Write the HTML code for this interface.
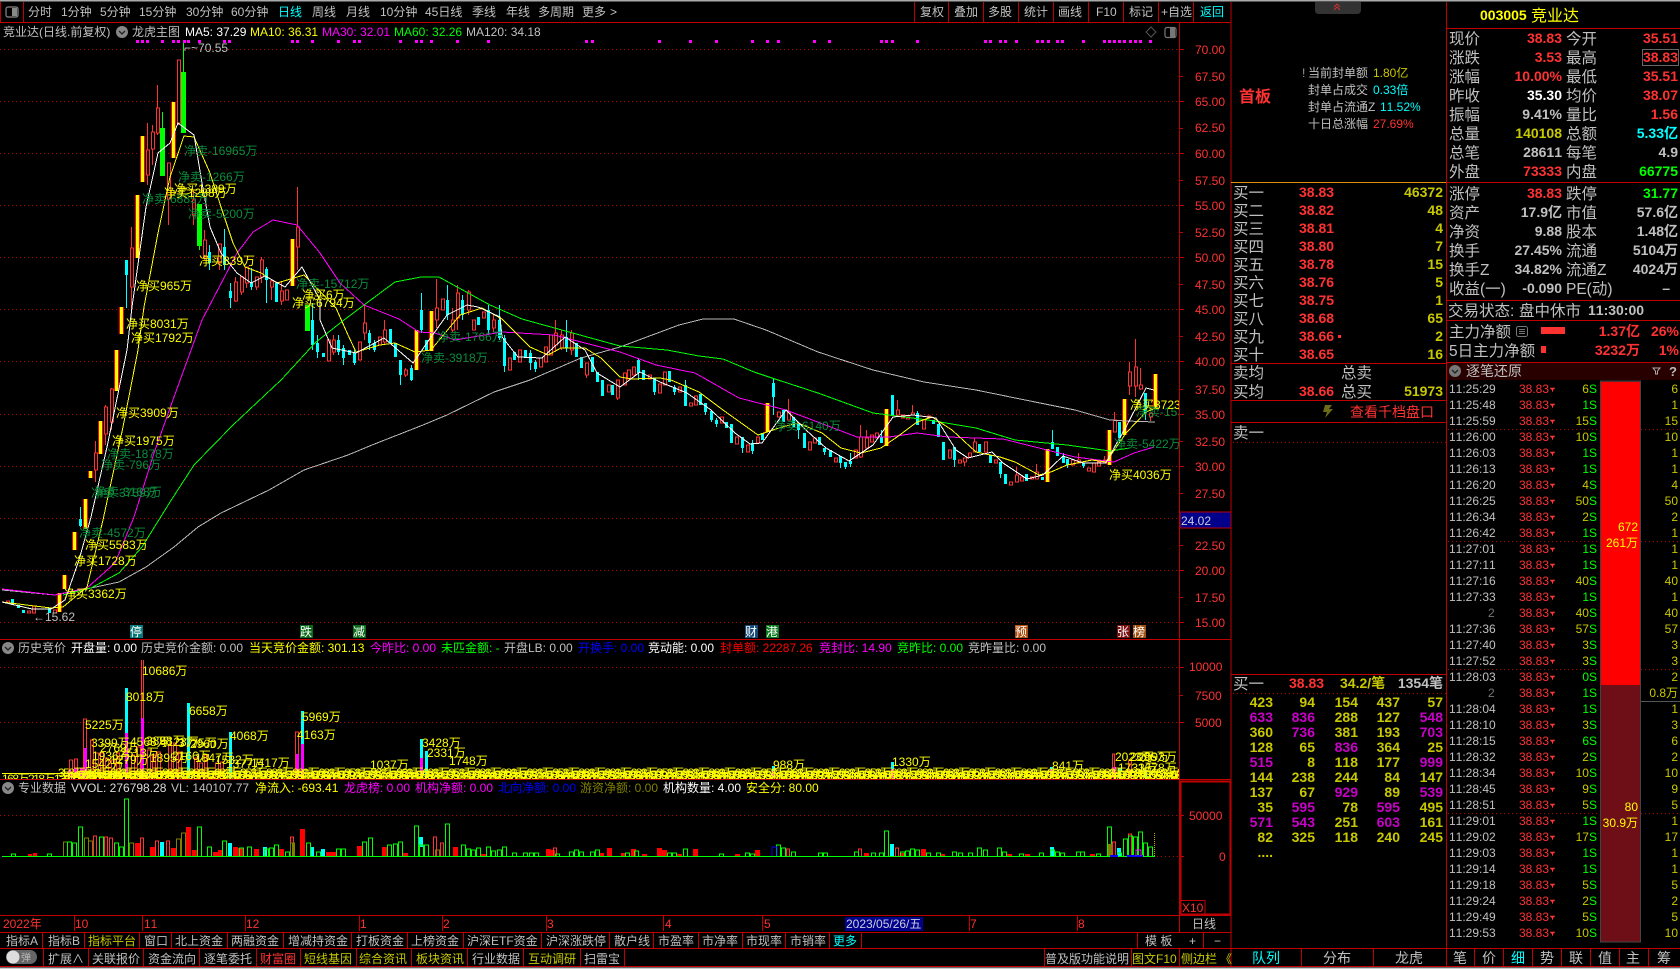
<!DOCTYPE html>
<html><head><meta charset="utf-8"><style>
html,body{margin:0;padding:0;background:#000;width:1680px;height:969px;overflow:hidden}
svg{display:block}
text{font-family:"Liberation Sans","WenQuanYi Zen Hei","Noto Sans CJK SC",sans-serif;font-size:12px;fill:#c0c0c0;white-space:pre;font-kerning:none}
.g{fill:#c0c0c0}.w{fill:#fff}.r{fill:#ff3232}.y{fill:#ff0}.o{fill:#c8c800}.c{fill:#0ff}.m{fill:#f0f}.gr{fill:#0f0}.b{fill:#00f}.d{fill:#0a8c3c}.v{fill:#808000}.pu{fill:#c800c8}
.L text{font-size:15.5px}
.B text,text.B{font-weight:bold;font-size:14px}
.e text,text.e{text-anchor:end}
.C text{text-anchor:middle}
.T text{font-size:14px}
.Tk text{font-size:12px}
</style></head><body>
<svg width="1680" height="969" viewBox="0 0 1680 969" xmlns="http://www.w3.org/2000/svg">
<defs>
<clipPath id="mc"><rect x="0" y="23" width="1179" height="616"/></clipPath>
<clipPath id="s1"><rect x="0" y="660" width="1179" height="119"/></clipPath>
<pattern id="ar" x="1550" y="380.7" width="6" height="16" patternUnits="userSpaceOnUse"><path d="M0 7h5v1h-1v1h-1v2h-1v-2h-1v-1h-1z" fill="#ff3232"/></pattern>
</defs>
<rect width="1680" height="969" fill="#000"/>
<rect x="0" y="0" width="1680" height="1.5" fill="#aaa"/>
<rect x="0" y="967.5" width="1680" height="1.5" fill="#ccc"/>

<!-- structural lines -->
<g stroke="#c00000" stroke-width="1" shape-rendering="crispEdges" fill="none">
<path d="M0 22.5H1231M0 639.5H1231M0 779.5H1231M0 915.5H1231M0 932.5H1231M0 948.5H1680M0 966.5H1680"/>
<path d="M0.5 2V22M23.5 2V22M1231 2V967M1179.5 22V932M1446.5 2V967"/>
<path d="M1447 28.5H1680M1447 182.5H1680M1231 363.5H1446M1231 400.5H1446M1231 422.5H1446M1231 674.5H1446M1447 300.5H1680M1447 320.5H1680M1447 362.5H1680"/>
<path d="M914.5 2V22M948.5 2V22M983.5 2V22M1018.5 2V22M1053.5 2V22M1088.5 2V22M1123.5 2V22M1158.5 2V22M1193.5 2V22"/>
<path d="M42.5 932V948M84.5 932V948M139.5 932V948M171.5 932V948M227.5 932V948M283.5 932V948M351.5 932V948M407.5 932V948M463.5 932V948M541.5 932V948M609.5 932V948M653.5 932V948M698.5 932V948M742.5 932V948M785.5 932V948M829.5 932V948M861.5 932V948M1137.5 932V948M1203.5 932V948"/>
<path d="M43.5 948V966M88.5 948V966M143.5 948V966M199.5 948V966M256.5 948V966M300.5 948V966M356.5 948V966M411.5 948V966M467.5 948V966M523.5 948V966M580.5 948V966M624.5 948V966M1044.5 948V966M1131.5 948V966M1179.5 948V966"/>
<path d="M1301.5 948V966M1373.5 948V966M1474.5 948V966M1503.5 948V966M1532.5 948V966M1561.5 948V966M1590.5 948V966M1619.5 948V966M1648.5 948V966"/>
<path d="M74.5 916V931M142.5 916V931M245.5 916V931M359.5 916V931M442.5 916V931M546.5 916V931M663.5 916V931M762.5 916V931M969.5 916V931M1077.5 916V931"/>
<rect x="1180.5" y="781.5" width="50" height="133" stroke-width="2"/>
<rect x="1181" y="900.5" width="24" height="14"/>
</g>
<path d="M1231 182.5H1446" stroke="#e09000" stroke-width="1" shape-rendering="crispEdges"/>

<!-- dotted grid -->
<g stroke="#b00000" stroke-width="1" stroke-dasharray="1 3" shape-rendering="crispEdges">
<path d="M0 49.5H1180M0 101.5H1180M0 153.5H1180M0 205.5H1180M0 257.5H1180M0 309.5H1180M0 361.5H1180M0 414.5H1180M0 466.5H1180M0 518.5H1180M0 570.5H1180M0 622.5H1180M0 667.5H1180M0 722.5H1180M0 815.5H1180M1157 856.5H1180"/>
<path d="M1233 442.5H1446M1233 693.5H1446M1448 429.5H1600M1641 429.5H1680M1448 541.5H1600M1641 541.5H1680M1448 669.5H1600M1641 669.5H1680M1448 813.5H1600M1641 813.5H1680"/>
</g>
<path d="M1180 49.5h4M1180 76.5h3M1180 101.5h4M1180 128.5h3M1180 153.5h4M1180 180.5h3M1180 205.5h4M1180 232.5h3M1180 257.5h4M1180 284.5h3M1180 309.5h4M1180 336.5h3M1180 361.5h4M1180 389.5h3M1180 414.5h4M1180 441.5h3M1180 466.5h4M1180 493.5h3M1180 545.5h3M1180 570.5h4M1180 597.5h3M1180 622.5h4M1180 667.5h4M1180 695.5h3M1180 722.5h4M1180 815.5h4M1180 856.5h4" stroke="#c00000" shape-rendering="crispEdges"/>

<!-- top menu -->
<rect x="6" y="7" width="12" height="10" rx="2" fill="none" stroke="#888" stroke-width="1.2"/><rect x="12" y="8" width="5" height="8" fill="#888"/>
<g>
<text x="28" y="16">分时</text><text x="61" y="16">1分钟</text><text x="100" y="16">5分钟</text><text x="139" y="16">15分钟</text><text x="186" y="16">30分钟</text><text x="231" y="16">60分钟</text><text x="278" y="16" class="c">日线</text><text x="312" y="16">周线</text><text x="346" y="16">月线</text><text x="380" y="16">10分钟</text><text x="425" y="16">45日线</text><text x="472" y="16">季线</text><text x="506" y="16">年线</text><text x="538" y="16">多周期</text><text x="582" y="16">更多</text><text x="610" y="16">&gt;</text>
<text x="920" y="16">复权</text><text x="954" y="16">叠加</text><text x="988" y="16">多股</text><text x="1024" y="16">统计</text><text x="1058" y="16">画线</text><text x="1096" y="16">F10</text><text x="1129" y="16">标记</text><text x="1161" y="16">+自选</text><text x="1200" y="16" class="c">返回</text>
</g>

<!-- main title -->
<text x="3" y="36">竞业达(日线.前复权)</text>
<circle cx="122" cy="32" r="6" fill="#888"/><path d="M119 31l3 3 3-3" stroke="#222" stroke-width="1.3" fill="none"/>
<text x="132" y="36">龙虎主图</text>
<text x="185" y="36" class="w">MA5: 37.29</text><text x="250" y="36" class="y">MA10: 36.31</text><text x="322" y="36" class="m">MA30: 32.01</text><text x="394" y="36" class="gr">MA60: 32.26</text><text x="466" y="36" class="g">MA120: 34.18</text>
<path fill="#f0f" shape-rendering="crispEdges" d="M136 40h3v3h-3zM141 40h3v3h-3zM146 40h3v3h-3zM161 40h3v3h-3zM172 40h3v3h-3zM177 40h3v3h-3zM183 40h3v3h-3zM187 40h3v3h-3zM198 40h3v3h-3zM223 40h3v3h-3zM228 40h3v3h-3zM291 40h3v3h-3zM296 40h3v3h-3zM311 40h3v3h-3zM337 40h3v3h-3zM353 40h3v3h-3zM358 40h3v3h-3zM399 40h3v3h-3zM415 40h3v3h-3zM420 40h3v3h-3zM430 40h3v3h-3zM456 40h3v3h-3zM487 40h3v3h-3zM585 40h3v3h-3zM591 40h3v3h-3zM658 40h3v3h-3zM689 40h3v3h-3zM715 40h3v3h-3zM751 40h3v3h-3zM766 40h3v3h-3zM777 40h3v3h-3zM813 40h3v3h-3zM828 40h3v3h-3zM880 40h3v3h-3zM885 40h3v3h-3zM891 40h3v3h-3zM916 40h3v3h-3zM984 40h3v3h-3zM989 40h3v3h-3zM999 40h3v3h-3zM1004 40h3v3h-3zM1015 40h3v3h-3zM1036 40h3v3h-3zM1041 40h3v3h-3zM1047 40h3v3h-3zM1056 40h3v3h-3zM1061 40h3v3h-3zM1082 40h3v3h-3zM1103 40h3v3h-3zM1108 40h3v3h-3zM1113 40h3v3h-3zM1118 40h3v3h-3zM1123 40h3v3h-3zM1129 40h3v3h-3zM1134 40h3v3h-3zM1139 40h3v3h-3zM1149 40h3v3h-3z"/>
<path d="M1151 27l5 5-5 5-5-5z" fill="none" stroke="#555"/>
<rect x="1165" y="27.5" width="11" height="10" rx="2" fill="none" stroke="#777" stroke-width="1.2"/><rect x="1170" y="28" width="5" height="9" fill="#777"/>

<!-- candles -->
<g clip-path="url(#mc)" shape-rendering="crispEdges">
<path fill="none" stroke="#ff3232" d="M95.5 441V482M105.5 405V445M111.5 388V430M131.5 227V310M147.5 123V185M152.5 125V165M157.5 85V135M168.5 163V225M178.5 60V125M193.5 190V225M204.5 230V260M219.5 244V270M235.5 277V302M241.5 277V295M246.5 267V288M256.5 277V290M261.5 257V283M271.5 280V300M281.5 282V305M297.5 187V270M333.5 335V355M364.5 305V340M384.5 320V345M405.5 368V377M436.5 279V328M452.5 308V332M457.5 285V330M468.5 290V315M493.5 315V332M555.5 320V352M561.5 330V350M571.5 330V355M586.5 363V378M617.5 380V400M788.5 399V420M860.5 425V458M866.5 430V450M897.5 400V415M912.5 405V415M964.5 458V466M974.5 438V452M1016.5 467V482M1036.5 464V479M1078.5 453V463M1104.5 456V463M1114.5 412V432M1129.5 362V395M1135.5 339V397M1140.5 368V390M1150.5 413V421"/>
<path fill="#000" stroke="#ff3232" d="M6.5 601h3v2h-3zM32.5 606h3v7h-3zM27.5 611h3v2h-3zM53.5 610h3v3h-3zM94.5 453h3v17h-3zM104.5 407h3v27h-3zM110.5 389h3v33h-3zM130.5 248h3v39h-3zM146.5 150h3v25h-3zM151.5 132h3v17h-3zM156.5 108h3v25h-3zM167.5 163h3v36h-3zM177.5 60h3v63h-3zM192.5 200h3v15h-3zM203.5 240h3v17h-3zM218.5 244h3v19h-3zM234.5 282h3v19h-3zM240.5 277h3v15h-3zM245.5 267h3v16h-3zM255.5 277h3v10h-3zM260.5 260h3v17h-3zM270.5 281h3v6h-3zM280.5 291h3v10h-3zM285.5 290h3v10h-3zM296.5 227h3v20h-3zM327.5 340h3v21h-3zM332.5 340h3v12h-3zM358.5 342h3v18h-3zM363.5 323h3v10h-3zM378.5 337h3v8h-3zM383.5 330h3v12h-3zM404.5 370h3v5h-3zM435.5 308h3v12h-3zM441.5 299h3v11h-3zM451.5 320h3v10h-3zM456.5 293h3v25h-3zM467.5 292h3v18h-3zM472.5 320h3v10h-3zM482.5 312h3v6h-3zM492.5 320h3v8h-3zM508.5 358h3v12h-3zM518.5 350h3v12h-3zM539.5 358h3v9h-3zM544.5 347h3v15h-3zM549.5 335h3v20h-3zM554.5 333h3v12h-3zM560.5 335h3v13h-3zM570.5 333h3v17h-3zM585.5 363h3v12h-3zM607.5 385h3v7h-3zM616.5 380h3v18h-3zM623.5 373h3v12h-3zM627.5 370h3v9h-3zM632.5 367h3v8h-3zM648.5 375h3v4h-3zM658.5 384h3v9h-3zM663.5 372h3v13h-3zM678.5 387h3v5h-3zM689.5 403h3v3h-3zM694.5 396h3v9h-3zM720.5 417h3v6h-3zM735.5 437h3v7h-3zM746.5 445h3v7h-3zM756.5 437h3v6h-3zM777.5 412h3v5h-3zM787.5 412h3v8h-3zM808.5 442h3v8h-3zM813.5 438h3v5h-3zM834.5 458h3v4h-3zM854.5 450h3v8h-3zM859.5 437h3v20h-3zM865.5 438h3v10h-3zM870.5 435h3v7h-3zM875.5 433h3v5h-3zM896.5 410h3v5h-3zM901.5 415h3v3h-3zM906.5 417h3v2h-3zM911.5 413h3v2h-3zM922.5 420h3v9h-3zM927.5 416h3v2h-3zM948.5 450h3v8h-3zM958.5 460h3v3h-3zM963.5 458h3v4h-3zM968.5 453h3v4h-3zM973.5 442h3v10h-3zM984.5 442h3v10h-3zM994.5 460h3v3h-3zM1009.5 482h3v3h-3zM1015.5 475h3v7h-3zM1020.5 477h3v4h-3zM1030.5 477h3v2h-3zM1035.5 472h3v7h-3zM1071.5 460h3v5h-3zM1077.5 460h3v3h-3zM1087.5 468h3v3h-3zM1092.5 463h3v9h-3zM1097.5 462h3v4h-3zM1103.5 460h3v3h-3zM1113.5 420h3v12h-3zM1128.5 372h3v14h-3zM1134.5 367h3v19h-3zM1139.5 385h3v4h-3zM1149.5 413h3v4h-3z"/>
<path fill="none" stroke="#0ff" d="M80.5 507V527M126.5 260V308M209.5 245V270M224.5 229V270M230.5 283V308M251.5 268V290M266.5 267V303M312.5 303V350M317.5 335V358M338.5 335V355M343.5 345V365M354.5 350V365M369.5 330V350M374.5 340V352M400.5 360V385M411.5 365V381M421.5 293V333M447.5 285V320M462.5 295V320M488.5 305V335M499.5 305V340M504.5 335V372M530.5 350V370M535.5 360V372M566.5 320V352M638.5 358V380M654.5 378V395M674.5 385V395M685.5 380V406M705.5 403V415M711.5 411V422M716.5 418V427M742.5 437V453M752.5 440V454M773.5 378V415M798.5 424V439M824.5 448V455M840.5 456V468M845.5 462V469M850.5 453V467M881.5 430V443M917.5 411V425M954.5 447V467M1000.5 462V478M1052.5 430V449M1063.5 453V463M1067.5 459V468M1083.5 463V468M1119.5 422V443M1145.5 393V420"/>
<path fill="#0ff" d="M11 599h3v6h-3zM17 605h3v3h-3zM22 610h3v3h-3zM48 608h3v5h-3zM79 519h3v7h-3zM125 260h3v15h-3zM208 252h3v11h-3zM223 247h3v18h-3zM229 291h3v7h-3zM250 282h3v5h-3zM265 269h3v11h-3zM275 283h3v19h-3zM311 320h3v25h-3zM316 343h3v9h-3zM322 353h3v4h-3zM337 340h3v12h-3zM342 348h3v10h-3zM348 350h3v5h-3zM353 353h3v10h-3zM368 333h3v10h-3zM373 343h3v7h-3zM389 329h3v14h-3zM394 343h3v14h-3zM399 360h3v15h-3zM410 368h3v12h-3zM420 310h3v20h-3zM425 340h3v10h-3zM446 300h3v15h-3zM461 300h3v15h-3zM477 317h3v8h-3zM487 310h3v20h-3zM498 320h3v18h-3zM503 338h3v28h-3zM513 352h3v8h-3zM524 350h3v8h-3zM529 353h3v10h-3zM534 362h3v7h-3zM565 337h3v11h-3zM575 343h3v14h-3zM580 357h3v11h-3zM591 357h3v15h-3zM596 372h3v10h-3zM601 380h3v16h-3zM611 385h3v10h-3zM637 360h3v13h-3zM642 370h3v10h-3zM653 378h3v14h-3zM668 371h3v11h-3zM673 387h3v5h-3zM684 385h3v21h-3zM699 394h3v11h-3zM704 403h3v9h-3zM710 411h3v9h-3zM715 420h3v4h-3zM725 422h3v6h-3zM730 424h3v19h-3zM741 437h3v11h-3zM751 443h3v8h-3zM761 433h3v7h-3zM772 383h3v14h-3zM782 410h3v12h-3zM792 417h3v10h-3zM797 424h3v6h-3zM803 433h3v15h-3zM818 437h3v8h-3zM823 448h3v4h-3zM829 450h3v7h-3zM839 456h3v7h-3zM844 462h3v5h-3zM849 461h3v3h-3zM880 437h3v6h-3zM891 395h3v20h-3zM916 413h3v12h-3zM932 420h3v4h-3zM937 424h3v13h-3zM942 442h3v18h-3zM953 447h3v13h-3zM978 444h3v8h-3zM989 455h3v8h-3zM999 462h3v12h-3zM1004 474h3v10h-3zM1025 474h3v7h-3zM1041 477h3v3h-3zM1051 442h3v7h-3zM1056 447h3v9h-3zM1062 456h3v7h-3zM1066 459h3v6h-3zM1082 463h3v3h-3zM1118 422h3v16h-3zM1144 393h3v20h-3z"/>
<path fill="none" stroke="#0f0" d="M162.5 112V176M183.5 43V133M199.5 204V250M307.5 305V331"/>
<path fill="#0f0" d="M160 128h5v48h-5zM181 72h5v61h-5zM197 204h5v42h-5zM305 305h5v26h-5z"/>
<path fill="#f00" d="M57 593h5v19h-5zM62 575h5v14h-5zM72 532h5v18h-5zM83 499h5v30h-5zM88 471h5v7h-5zM98 421h5v33h-5zM114 350h5v41h-5zM119 307h5v27h-5zM135 195h5v63h-5zM140 136h5v46h-5zM171 102h5v56h-5zM290 239h5v47h-5zM414 330h5v40h-5zM429 311h5v40h-5zM765 403h5v29h-5zM884 409h5v37h-5zM1045 449h5v33h-5zM1107 430h5v35h-5zM1122 399h5v36h-5zM1153 374h5v33h-5z"/>
<path fill="#ff0" d="M58 593h3v19h-3zM63 575h3v14h-3zM73 532h3v18h-3zM84 499h3v30h-3zM89 471h3v7h-3zM99 421h3v33h-3zM115 350h3v41h-3zM120 307h3v27h-3zM136 195h3v63h-3zM141 136h3v46h-3zM172 102h3v56h-3zM291 239h3v47h-3zM415 330h3v40h-3zM430 311h3v40h-3zM766 403h3v29h-3zM885 409h3v37h-3zM1046 449h3v33h-3zM1108 430h3v35h-3zM1123 399h3v36h-3zM1154 374h3v33h-3z"/>
</g>

<!-- MA lines -->
<g clip-path="url(#mc)" fill="none" stroke-width="1" shape-rendering="crispEdges">
<polyline stroke="#b8b8b8" points="2,590 55,595 91,588 119,582 146,567 174,547 198,527 221,513 269,490 304,470 348,455 372,445 423,425 447,415 494,392 530,380 581,358 620,347 679,325 703,319 734,319 766,330 818,352 873,370 924,382 976,390 1035,402 1075,410 1110,420 1126,421 1155,422"/>
<polyline stroke="#0f0" points="63,595 91,588 119,573 142,547 170,502 194,465 233,425 281,380 316,342 344,320 364,305 395,282 421,277 439,277 490,305 522,319 569,332 620,346 667,350 699,356 723,359 754,372 778,380 818,393 873,413 928,420 976,428 1015,440 1067,445 1110,451 1130,448"/>
<polyline stroke="#f0f" points="2,589 55,595 87,588 115,563 134,517 154,453 174,397 202,320 237,253 253,232 273,220 297,225 320,253 340,283 364,305 399,319 419,332 435,333 455,340 502,332 554,335 620,352 656,365 695,373 739,398 786,410 857,437 889,437 917,433 948,437 1003,439 1039,448 1075,457 1114,462 1134,453 1154,447"/>
<polyline stroke="#ff0" points="2,602 51,608 63,607 87,587 103,520 123,427 138,350 144,307 158,233 170,177 184,136 194,137 210,173 221,207 233,243 245,267 261,273 277,283 304,275 336,308 348,335 356,352 380,345 395,343 415,352 431,350 460,315 482,308 502,319 530,347 548,355 561,348 585,348 601,358 620,377 632,379 660,378 671,380 699,392 723,410 758,435 782,427 798,423 822,433 841,448 861,453 881,448 897,437 917,422 932,417 952,430 976,452 1000,457 1015,462 1039,475 1051,472 1067,465 1092,460 1106,462 1126,433 1146,412 1158,407"/>
<polyline stroke="#fff" points="2,602 32,609 51,609 65,600 79,560 91,517 107,447 127,350 132,307 146,207 158,153 170,143 178,123 194,135 202,183 210,227 221,253 237,273 251,283 265,276 285,287 302,267 320,300 320,320 332,348 356,353 384,338 413,363 429,340 447,315 467,305 478,307 500,317 502,337 518,357 542,358 565,337 585,350 597,373 620,387 640,372 660,382 687,393 711,410 735,433 750,444 762,443 786,410 806,430 826,448 849,461 873,445 893,417 913,415 936,418 956,450 968,458 992,452 1003,463 1027,479 1043,475 1063,456 1083,463 1106,463 1114,448 1126,427 1146,388 1154,390"/>
</g>

<!-- main labels -->
<g clip-path="url(#mc)">
<text x="184" y="52" fill="#c0c0c0">⌐~70.55</text>
<text x="33" y="621">←15.62</text>
<g class="d-g">
<text x="142" y="203" class="d">净卖-6885万</text><text x="184" y="155" class="d">净卖-16965万</text><text x="178" y="181" class="d">净卖-1266万</text><text x="188" y="218" class="d">净卖-5200万</text><text x="296" y="288" class="d">净卖-15712万</text><text x="437" y="341" class="d">净卖-1766万</text><text x="421" y="362" class="d">净卖-3918万</text><text x="107" y="458" class="d">净卖-1878万</text><text x="101" y="469" class="d">净卖-796万</text><text x="95" y="496" class="d">净卖-3168万</text><text x="91" y="497" class="d">净卖-3759万</text><text x="79" y="537" class="d">净卖-4572万</text><text x="774" y="430" class="d">净卖-6140万</text><text x="1114" y="448" class="d">净卖-5422万</text><text x="1136" y="416" class="d">净卖-1532万</text>
</g>
<text x="174" y="193" class="y">净买1389万</text><text x="164" y="197" class="y">净买1288万</text><text x="199" y="265" class="y">净买839万</text><text x="136" y="290" class="y">净买965万</text><text x="302" y="299" class="y">净买6万</text><text x="292" y="307" class="y">净买6794万</text><text x="126" y="328" class="y">净买8031万</text><text x="131" y="342" class="y">净买1792万</text><text x="116" y="417" class="y">净买3909万</text><text x="112" y="445" class="y">净买1975万</text><text x="85" y="549" class="y">净买5583万</text><text x="74" y="565" class="y">净买1728万</text><text x="64" y="598" class="y">净买3362万</text><text x="1109" y="479" class="y">净买4036万</text><text x="1130" y="409" class="y">净买3723万</text>
</g>
<g shape-rendering="crispEdges">
<rect x="130" y="625" width="13" height="13" fill="#0a7878"/><rect x="300" y="625" width="13" height="13" fill="#0a6a1a"/><rect x="353" y="625" width="13" height="13" fill="#0a6a1a"/><rect x="745" y="625" width="13" height="13" fill="#174a78"/><rect x="766" y="625" width="13" height="13" fill="#0a7a1a"/><rect x="1015" y="625" width="13" height="13" fill="#b05010"/><rect x="1117" y="625" width="13" height="13" fill="#7a1010"/><rect x="1133" y="625" width="13" height="13" fill="#a05010"/>
</g>
<g style="fill:#fff">
<text x="130" y="636" class="w">停</text><text x="300" y="636" class="w">跌</text><text x="353" y="636" class="w">减</text><text x="745" y="636" class="w">财</text><text x="766" y="636" class="w">港</text><text x="1015" y="636" class="w">预</text><text x="1117" y="636" class="w">张</text><text x="1133" y="636" class="w">榜</text>
</g>

<!-- right axis labels -->
<g class="r-a">
<text x="1195" y="54" class="r">70.00</text><text x="1195" y="81" class="r">67.50</text><text x="1195" y="106" class="r">65.00</text><text x="1195" y="132" class="r">62.50</text><text x="1195" y="158" class="r">60.00</text><text x="1195" y="185" class="r">57.50</text><text x="1195" y="210" class="r">55.00</text><text x="1195" y="237" class="r">52.50</text><text x="1195" y="262" class="r">50.00</text><text x="1195" y="289" class="r">47.50</text><text x="1195" y="314" class="r">45.00</text><text x="1195" y="341" class="r">42.50</text><text x="1195" y="366" class="r">40.00</text><text x="1195" y="394" class="r">37.50</text><text x="1195" y="419" class="r">35.00</text><text x="1195" y="446" class="r">32.50</text><text x="1195" y="471" class="r">30.00</text><text x="1195" y="498" class="r">27.50</text><text x="1195" y="550" class="r">22.50</text><text x="1195" y="575" class="r">20.00</text><text x="1195" y="602" class="r">17.50</text><text x="1195" y="627" class="r">15.00</text>
</g>
<rect x="1180" y="512" width="51" height="16" fill="#00008b" stroke="#c00000" shape-rendering="crispEdges"/>
<text x="1181" y="525" fill="#ccc" style="fill:#ccd">24.02</text>

<!-- sub panel 1 -->
<circle cx="8" cy="648" r="6" fill="#888"/><path d="M5 647l3 3 3-3" stroke="#222" stroke-width="1.3" fill="none"/>
<text x="18" y="652">历史竞价</text><text x="71" y="652" class="w">开盘量: 0.00</text><text x="141" y="652">历史竞价金额: 0.00</text><text x="249" y="652" class="y">当天竞价金额: 301.13</text><text x="370" y="652" class="m">今昨比: 0.00</text><text x="441" y="652" class="gr">未匹金额: -</text><text x="504" y="652">开盘LB: 0.00</text><text x="578" y="652" class="b">开换手: 0.00</text><text x="648" y="652" class="w">竞动能: 0.00</text><text x="720" y="652" style="fill:#f00">封单额: 22287.26</text><text x="819" y="652" class="m">竞封比: 14.90</text><text x="897" y="652" class="gr">竞昨比: 0.00</text><text x="968" y="652">竞昨量比: 0.00</text>
<g clip-path="url(#s1)" shape-rendering="crispEdges">
<path fill="none" stroke="#ff3232" d="M69.5 778V760h3V778M74.5 778V759h3V778M83.5 778V719h3V778M90.5 778V740h3V778M95.5 778V753h3V778M100.5 778V753h3V778M105.5 778V758h3V778M111.5 778V760h3V778M116.5 778V753h3V778M131.5 778V755h3V778M137.5 778V747h3V778M141.5 778V659h2V778M147.5 778V750h3V778M152.5 778V755h3V778M157.5 778V752h3V778M168.5 778V745h3V778M173.5 778V743h3V778M178.5 778V752h3V778M194.5 778V758h3V778M199.5 778V763h3V778M204.5 778V755h3V778M215.5 778V763h3V778M220.5 778V762h3V778M295.5 778V732h3V778M1112.5 778V754h2V778M1128.5 778V760h3V778"/>
<path fill="#0ff" d="M125 688h3v90h-3zM187 703h3v75h-3zM229 732h3v46h-3zM301 711h3v67h-3zM420 739h3v39h-3zM425 751h3v27h-3zM772 766h3v12h-3zM891 762h3v16h-3zM1050 767h3v11h-3zM1118 768h3v10h-3zM1144 770h3v8h-3z"/>
<path fill="#f0f" d="M84 748h3v30h-3zM125 733h3v45h-3zM141 718h3v60h-3zM296 754h3v24h-3zM301 744h3v34h-3zM420 758h3v20h-3zM772 771h3v7h-3zM891 769h3v9h-3zM1050 769h3v9h-3zM1113 767h3v11h-3zM1129 770h3v8h-3zM68 770h3v8h-3zM74 768h3v10h-3zM80 768h3v10h-3z"/>
<rect x="2" y="773" width="230" height="1" fill="#ff0"/>
</g>
<g clip-path="url(#s1)">
<g style="font-size:12px">
<text x="142" y="675" class="y">10686万</text><text x="126" y="701" class="y">8018万</text><text x="85" y="729" class="y">5225万</text><text x="189" y="715" class="y">6658万</text><text x="302" y="721" class="y">5969万</text><text x="230" y="740" class="y">4068万</text><text x="297" y="739" class="y">4163万</text><text x="91" y="747" class="y">3399万</text><text x="422" y="747" class="y">3428万</text><text x="427" y="757" class="y">2331万</text><text x="449" y="765" class="y">1748万</text><text x="251" y="767" class="y">1417万</text><text x="370" y="769" class="y">1037万</text><text x="773" y="769" class="y">988万</text><text x="892" y="766" class="y">1330万</text><text x="1052" y="770" class="y">841万</text><text x="1115" y="761" class="y">2023万</text><text x="1130" y="761" class="y">2096万</text><text x="1138" y="761" class="y">2093万</text><text x="1118" y="772" class="y">1733万</text><text x="1138" y="772" class="y">1678万</text>
<text x="130" y="746" class="y">4568万</text><text x="146" y="745" class="y">3898万</text><text x="160" y="746" class="y">4123万</text><text x="178" y="747" class="y">3775万</text><text x="190" y="748" class="y">2960万</text><text x="100" y="752" class="y">2769万</text><text x="120" y="757" class="y">2513万</text><text x="92" y="760" class="y">1936万</text><text x="110" y="764" class="y">1279万</text><text x="85" y="768" class="y">1542万</text><text x="150" y="762" class="y">1895万</text><text x="172" y="760" class="y">2166万</text><text x="195" y="762" class="y">1847万</text><text x="215" y="764" class="y">1532万</text><text x="226" y="768" class="y">1377万</text>
</g>
<text x="2" y="783" class="y" style="letter-spacing:-1.5px">168万218万136万168万218万136万</text>
<text x="68" y="781" class="y" style="letter-spacing:-1.5px">888万358万688万889万358万688万888万888万358万688万889万358万688万888万888万358万688万889万358万688万888万888万358万688万889万358万688万888万888万358万688万889万358万688万888万888万358万688万889万358万688万888万888万358万688万889万358万688万888万</text>
<text x="78" y="779" class="y" style="letter-spacing:-1.5px">688万888万358万888万889万358万688万888万358万888万889万358万688万888万358万888万889万358万688万888万358万888万889万358万688万888万358万888万889万358万688万888万358万888万889万358万688万888万358万888万889万358万688万888万358万888万889万358万688万</text>
<text x="58" y="777" class="y" style="letter-spacing:-1.5px">358万889万688万358万888万889万688万358万888万889万688万358万888万889万688万358万888万889万688万358万888万889万688万358万888万889万688万358万888万889万688万358万888万889万688万358万888万889万688万358万888万889万688万358万888万889万688万358万</text>
<text x="63" y="780" class="y" style="letter-spacing:-1.5px">518万668万838万518万668万838万518万668万838万518万668万838万518万668万838万518万668万838万518万668万838万518万668万838万518万668万838万518万668万838万518万668万838万518万668万838万518万668万838万518万668万838万518万668万838万518万668万838万518万668万838万</text>
</g>
<text x="1189" y="671" class="r">10000</text><text x="1195" y="700" class="r">7500</text><text x="1195" y="727" class="r">5000</text>

<!-- sub panel 2 -->
<circle cx="8" cy="788" r="6" fill="#888"/><path d="M5 787l3 3 3-3" stroke="#222" stroke-width="1.3" fill="none"/>
<text x="18" y="792">专业数据</text><text x="71" y="792" style="fill:#ddd">VVOL: 276798.28</text><text x="171" y="792">VL: 140107.77</text><text x="255" y="792" class="y">净流入: -693.41</text><text x="344" y="792" class="m">龙虎榜: 0.00</text><text x="415" y="792" class="m">机构净额: 0.00</text><text x="498" y="792" class="b">北向净额: 0.00</text><text x="580" y="792" class="v">游资净额: 0.00</text><text x="663" y="792" class="w">机构数量: 4.00</text><text x="746" y="792" class="y">安全分: 80.00</text>
<g shape-rendering="crispEdges">
<path fill="#f00" d="M28 854h4v2h-4zM33 853h4v3h-4zM135 843h5v13h-5zM150 847h5v9h-5zM171 848h5v8h-5zM186 827h5v29h-5zM192 850h5v6h-5zM213 852h5v4h-5zM218 850h5v6h-5zM233 847h5v9h-5zM238 848h5v8h-5zM254 849h5v7h-5zM279 849h5v7h-5zM300 829h5v27h-5zM326 852h5v4h-5zM331 852h5v4h-5zM357 846h5v10h-5zM382 847h5v9h-5zM403 853h5v3h-5zM453 847h5v9h-5zM481 854h5v2h-5zM546 849h5v7h-5zM550 850h5v6h-5zM607 848h5v8h-5zM599 853h5v3h-5zM621 853h5v3h-5zM631 849h5v7h-5zM642 854h5v2h-5zM657 848h5v8h-5zM662 850h5v6h-5zM677 854h5v2h-5zM693 849h5v7h-5zM735 854h5v2h-5zM755 850h5v6h-5zM864 853h5v3h-5zM921 849h5v7h-5zM1007 854h5v2h-5zM900 853h5v3h-5zM940 854h5v2h-5zM1025 854h5v2h-5zM1090 854h5v2h-5z"/>
<path fill="#0ff" d="M160 842h4v14h-4zM228 843h4v13h-4zM263 847h4v9h-4zM310 847h4v9h-4zM321 849h4v7h-4zM419 837h4v10h-4zM890 844h4v12h-4zM1050 847h4v9h-4zM1117 848h4v8h-4z"/>
<path fill="none" stroke="#f33" d="M93.5 856V836h3V856M104.5 856V837h3V856M109.5 856V838h3V856M140.5 856V838h3V856M155.5 856V841h3V856M166.5 856V841h3V856M433.5 856V837h3V856M440.5 856V843h3V856M290.5 856V837h3V856M553.5 856V848h3V856M786.5 856V849h3V856M858.5 856V849h3V856M895.5 856V848h3V856M1112.5 856V842h3V856M1128.5 856V834h3V856"/>
<path fill="none" stroke="#808000" d="M63.5 856V842h4V856M84.5 856V838h4V856M88.5 856V841h4V856M129.5 856V843h4V856M176.5 856V839h4V856M181.5 856V833h4V856M290.5 856V843h4V856M435.5 856V850h4V856"/>
<path fill="none" stroke="#0f0" d="M11.5 856V854h4V856M47.5 856V854h4V856M67.5 856V842h4V856M72.5 856V843h4V856M78.5 856V827h4V856M99.5 856V837h4V856M114.5 856V843h4V856M124.5 856V799h4V856M119.5 856V847h4V856M197.5 856V827h4V856M207.5 856V847h4V856M222.5 856V841h4V856M239.5 856V848h4V856M247.5 856V847h4V856M264.5 856V849h4V856M269.5 856V848h4V856M274.5 856V845h4V856M285.5 856V852h4V856M306.5 856V843h4V856M316.5 856V852h4V856M336.5 856V849h4V856M341.5 856V849h4V856M362.5 856V842h4V856M368.5 856V838h4V856M387.5 856V845h4V856M393.5 856V844h4V856M398.5 856V842h4V856M414.5 856V826h4V856M419.5 856V845h4V856M424.5 856V845h4V856M445.5 856V824h4V856M461.5 856V845h4V856M466.5 856V849h4V856M471.5 856V850h4V856M476.5 856V848h4V856M486.5 856V847h4V856M491.5 856V851h4V856M497.5 856V850h4V856M502.5 856V847h4V856M512.5 856V853h4V856M523.5 856V853h4V856M529.5 856V853h4V856M534.5 856V853h4V856M555.5 856V854h4V856M569.5 856V852h4V856M574.5 856V850h4V856M579.5 856V852h4V856M590.5 856V852h4V856M595.5 856V850h4V856M625.5 856V853h4V856M634.5 856V851h4V856M667.5 856V853h4V856M672.5 856V853h4V856M683.5 856V849h4V856M719.5 856V854h4V856M745.5 856V853h4V856M750.5 856V854h4V856M776.5 856V845h4V856M781.5 856V848h4V856M791.5 856V852h4V856M818.5 856V853h4V856M823.5 856V853h4V856M854.5 856V852h4V856M871.5 856V853h4V856M879.5 856V853h4V856M884.5 856V831h4V856M900.5 856V852h4V856M905.5 856V851h4V856M910.5 856V849h4V856M915.5 856V850h4V856M926.5 856V853h4V856M936.5 856V853h4V856M952.5 856V852h4V856M958.5 856V853h4V856M968.5 856V853h4V856M977.5 856V848h4V856M983.5 856V850h4V856M997.5 856V848h4V856M1002.5 856V852h4V856M1019.5 856V854h4V856M1039.5 856V853h4V856M1050.5 856V850h4V856M1055.5 856V852h4V856M1060.5 856V853h4V856M1076.5 856V852h4V856M1080.5 856V852h4V856M1096.5 856V854h4V856M1107.5 856V827h4V856M1117.5 856V853h4V856M1123.5 856V839h4V856M1128.5 856V836h4V856M1133.5 856V837h4V856M1138.5 856V832h4V856M1143.5 856V843h4V856M1148.5 856V847h4V856"/>
<path d="M2 856.5H1155" stroke="#0f0" shape-rendering="crispEdges"/>
<path d="M772 856V847h5V856" fill="none" stroke="#00f"/>
<path fill="#808000" d="M1108 844h4v12h-4zM292 843h3v13h-3z"/>
<path fill="#00f" d="M1110 855h8v2h-8zM1127 855h16v2h-16z"/>
<path d="M1136 856V850h5V856" fill="none" stroke="#f0f"/>
<path d="M1154.5 856V832" stroke="#c8a000" stroke-dasharray="1 1"/>
</g>
<text x="1189" y="820" class="r">50000</text><text x="1219" y="861" class="r">0</text>
<text x="1182" y="912" class="r">X10</text>

<!-- date axis -->
<text x="3" y="928" class="r">2022年</text><text x="75" y="928" class="r">10</text><text x="144" y="928" class="r">11</text><text x="246" y="928" class="r">12</text><text x="360" y="928" class="r">1</text><text x="443" y="928" class="r">2</text><text x="547" y="928" class="r">3</text><text x="665" y="928" class="r">4</text><text x="764" y="928" class="r">5</text><text x="970" y="928" class="r">7</text><text x="1078" y="928" class="r">8</text>
<rect x="845" y="917" width="78" height="14" fill="#00008b" shape-rendering="crispEdges"/>
<text x="846" y="928" style="fill:#ccd">2023/05/26/五</text>
<text x="1192" y="928">日线</text>

<!-- bottom tabs row 1 -->
<text x="6" y="945">指标A</text><text x="48" y="945">指标B</text><text x="88" y="945" class="o">指标平台</text><text x="144" y="945">窗口</text><text x="175" y="945">北上资金</text><text x="231" y="945">两融资金</text><text x="288" y="945">增减持资金</text><text x="356" y="945">打板资金</text><text x="411" y="945">上榜资金</text><text x="467" y="945">沪深ETF资金</text><text x="546" y="945">沪深涨跌停</text><text x="614" y="945">散户线</text><text x="658" y="945">市盈率</text><text x="702" y="945">市净率</text><text x="746" y="945">市现率</text><text x="790" y="945">市销率</text><text x="833" y="945" class="c">更多</text><text x="1145" y="945">模 板</text><text x="1189" y="945">+</text><text x="1214" y="945">−</text>
<!-- row 2 -->
<rect x="6" y="950" width="31" height="14" rx="7" fill="#666"/><circle cx="13" cy="957" r="6.5" fill="#ddd"/><text x="21" y="961" style="font-size:10px;fill:#bbb">弹</text>
<text x="48" y="963">扩展∧</text><text x="92" y="963">关联报价</text><text x="148" y="963">资金流向</text><text x="204" y="963">逐笔委托</text><text x="260" y="963" class="r">财富圈</text><text x="304" y="963" class="o">短线基因</text><text x="359" y="963" class="o">综合资讯</text><text x="416" y="963" class="o">板块资讯</text><text x="472" y="963">行业数据</text><text x="528" y="963" class="o">互动调研</text><text x="584" y="963">扫雷宝</text><text x="1045" y="963">普及版功能说明</text><text x="1132" y="963" class="o">图文F10</text><text x="1181" y="963" class="o">侧边栏</text><text x="1220" y="963" class="o">《</text>

<!-- panel 1 top -->
<path d="M1315 2h46v8q0 4-4 4h-38q-4 0-4-4z" fill="#333"/><path d="M1334 7l3-3 3 3M1334 10l3-3 3 3" stroke="#c33" fill="none"/>
<text x="1239" y="102" style="font-size:16px;font-weight:bold;fill:#ff3232">首板</text>
<text x="1302" y="77" style="fill:#999">!</text>
<text x="1308" y="77">当前封单额</text><text x="1373" y="77" class="o">1.80亿</text>
<text x="1308" y="94">封单占成交</text><text x="1373" y="94" class="c">0.33倍</text>
<text x="1308" y="111">封单占流通Z</text><text x="1380" y="111" class="c">11.52%</text>
<text x="1308" y="128">十日总涨幅</text><text x="1373" y="128" class="r">27.69%</text>

<!-- order book -->
<g class="L">
<text x="1233" y="198">买一</text><text x="1233" y="216">买二</text><text x="1233" y="234">买三</text><text x="1233" y="252">买四</text><text x="1233" y="270">买五</text><text x="1233" y="288">买六</text><text x="1233" y="306">买七</text><text x="1233" y="324">买八</text><text x="1233" y="342">买九</text><text x="1233" y="360">买十</text>
<text x="1233" y="378">卖均</text><text x="1341" y="378">总卖</text><text x="1233" y="397">买均</text><text x="1341" y="397">总买</text><text x="1233" y="438">卖一</text><text x="1233" y="689">买一</text>
</g>
<g class="B">
<text x="1299" y="197" class="r">38.83</text><text x="1299" y="215" class="r">38.82</text><text x="1299" y="233" class="r">38.81</text><text x="1299" y="251" class="r">38.80</text><text x="1299" y="269" class="r">38.78</text><text x="1299" y="287" class="r">38.76</text><text x="1299" y="305" class="r">38.75</text><text x="1299" y="323" class="r">38.68</text><text x="1299" y="341" class="r">38.66</text><text x="1299" y="359" class="r">38.65</text><text x="1299" y="396" class="r">38.66</text>
</g>
<g class="B e">
<text x="1443" y="197" class="o">46372</text><text x="1443" y="215" class="o">48</text><text x="1443" y="233" class="o">4</text><text x="1443" y="251" class="o">7</text><text x="1443" y="269" class="o">15</text><text x="1443" y="287" class="o">5</text><text x="1443" y="305" class="o">1</text><text x="1443" y="323" class="o">65</text><text x="1443" y="341" class="o">2</text><text x="1443" y="359" class="o">16</text><text x="1443" y="396" class="o">51973</text>
</g>
<rect x="1338" y="335" width="3" height="3" fill="#f33"/>
<path d="M1325 405h7l-3 4h4l-8 9 2-6h-4z" fill="#6b6b1a"/>
<text x="1350" y="417" style="font-size:14px;fill:#ff3232">查看千档盘口</text>
<text x="1289" y="688" class="r B">38.83</text><text x="1340" y="688" class="o" style="font-size:14px;font-weight:bold">34.2/笔</text><text x="1443" y="688" class="e" style="font-size:14px;font-weight:bold;text-anchor:end">1354笔</text>

<!-- queue -->
<g class="B e">
<text x="1273" y="707" class="o">423</text><text x="1315" y="707" class="o">94</text><text x="1358" y="707" class="o">154</text><text x="1400" y="707" class="o">437</text><text x="1443" y="707" class="o">57</text>
<text x="1273" y="722" class="pu">633</text><text x="1315" y="722" class="pu">836</text><text x="1358" y="722" class="o">288</text><text x="1400" y="722" class="o">127</text><text x="1443" y="722" class="pu">548</text>
<text x="1273" y="737" class="o">360</text><text x="1315" y="737" class="pu">736</text><text x="1358" y="737" class="o">381</text><text x="1400" y="737" class="o">193</text><text x="1443" y="737" class="pu">703</text>
<text x="1273" y="752" class="o">128</text><text x="1315" y="752" class="o">65</text><text x="1358" y="752" class="pu">836</text><text x="1400" y="752" class="o">364</text><text x="1443" y="752" class="o">25</text>
<text x="1273" y="767" class="pu">515</text><text x="1315" y="767" class="o">8</text><text x="1358" y="767" class="o">118</text><text x="1400" y="767" class="o">177</text><text x="1443" y="767" class="pu">999</text>
<text x="1273" y="782" class="o">144</text><text x="1315" y="782" class="o">238</text><text x="1358" y="782" class="o">244</text><text x="1400" y="782" class="o">84</text><text x="1443" y="782" class="o">147</text>
<text x="1273" y="797" class="o">137</text><text x="1315" y="797" class="o">67</text><text x="1358" y="797" class="pu">929</text><text x="1400" y="797" class="o">89</text><text x="1443" y="797" class="pu">539</text>
<text x="1273" y="812" class="o">35</text><text x="1315" y="812" class="pu">595</text><text x="1358" y="812" class="o">78</text><text x="1400" y="812" class="pu">595</text><text x="1443" y="812" class="o">495</text>
<text x="1273" y="827" class="pu">571</text><text x="1315" y="827" class="pu">543</text><text x="1358" y="827" class="o">251</text><text x="1400" y="827" class="pu">603</text><text x="1443" y="827" class="o">161</text>
<text x="1273" y="842" class="o">82</text><text x="1315" y="842" class="o">325</text><text x="1358" y="842" class="o">118</text><text x="1400" y="842" class="o">240</text><text x="1443" y="842" class="o">245</text>
<text x="1273" y="857" class="o">....</text>
</g>
<g class="C T">
<text x="1266" y="963" class="c">队列</text><text x="1337" y="963">分布</text><text x="1409" y="963">龙虎</text><text x="1460" y="963">笔</text><text x="1489" y="963">价</text><text x="1518" y="963" class="c">细</text><text x="1547" y="963">势</text><text x="1576" y="963">联</text><text x="1605" y="963">值</text><text x="1633" y="963">主</text><text x="1664" y="963">筹</text>
</g>

<!-- panel 2 -->
<text x="1480" y="20" class="y" style="font-size:14px;font-weight:bold">003005</text><text x="1531" y="21" class="y" style="font-size:16px">竞业达</text>
<g class="L">
<text x="1449" y="44">现价</text><text x="1566" y="44">今开</text><text x="1449" y="63">涨跌</text><text x="1566" y="63">最高</text><text x="1449" y="82">涨幅</text><text x="1566" y="82">最低</text><text x="1449" y="101">昨收</text><text x="1566" y="101">均价</text><text x="1449" y="120">振幅</text><text x="1566" y="120">量比</text><text x="1449" y="139">总量</text><text x="1566" y="139">总额</text><text x="1449" y="158">总笔</text><text x="1566" y="158">每笔</text><text x="1449" y="177">外盘</text><text x="1566" y="177">内盘</text>
<text x="1449" y="199">涨停</text><text x="1566" y="199">跌停</text><text x="1449" y="218">资产</text><text x="1566" y="218">市值</text><text x="1449" y="237">净资</text><text x="1566" y="237">股本</text><text x="1449" y="256">换手</text><text x="1566" y="256">流通</text><text x="1449" y="275">换手Z</text><text x="1566" y="275">流通Z</text><text x="1449" y="294">收益(一)</text><text x="1566" y="294">PE(动)</text>
<text x="1448" y="316">交易状态:</text><text x="1519" y="316">盘中休市</text>
<text x="1449" y="337">主力净额</text><text x="1449" y="356">5日主力净额</text>
</g>
<g class="B e">
<text x="1562" y="43" class="r">38.83</text><text x="1678" y="43" class="r">35.51</text><text x="1562" y="62" class="r">3.53</text><text x="1678" y="62" class="r">38.83</text><text x="1562" y="81" class="r">10.00%</text><text x="1678" y="81" class="r">35.51</text><text x="1562" y="100" class="w">35.30</text><text x="1678" y="100" class="r">38.07</text><text x="1562" y="119">9.41%</text><text x="1678" y="119" class="r">1.56</text><text x="1562" y="138" class="o">140108</text><text x="1678" y="138" class="c">5.33亿</text><text x="1562" y="157">28611</text><text x="1678" y="157">4.9</text><text x="1562" y="176" class="r">73333</text><text x="1678" y="176" class="gr">66775</text>
<text x="1562" y="198" class="r">38.83</text><text x="1678" y="198" class="gr">31.77</text><text x="1562" y="217">17.9亿</text><text x="1678" y="217">57.6亿</text><text x="1562" y="236">9.88</text><text x="1678" y="236">1.48亿</text><text x="1562" y="255">27.45%</text><text x="1678" y="255">5104万</text><text x="1562" y="274">34.82%</text><text x="1678" y="274">4024万</text><text x="1562" y="293">-0.090</text><text x="1670" y="293">–</text>
<text x="1640" y="336" class="r">1.37亿</text><text x="1679" y="336" class="r">26%</text><text x="1640" y="355" class="r">3232万</text><text x="1679" y="355" class="r">1%</text>
</g>
<text x="1588" y="315" class="B">11:30:00</text>
<rect x="1642.5" y="49.5" width="36" height="16" fill="none" stroke="#666"/>
<rect x="1516.5" y="326.5" width="11" height="10" rx="2" fill="none" stroke="#777"/><path d="M1519 329.5h6M1519 331.5h6M1519 333.5h6" stroke="#777"/>
<rect x="1541" y="327" width="24" height="7" fill="#ff3232"/><rect x="1541" y="346" width="5" height="7" fill="#ff3232"/>

<!-- tick header -->
<rect x="1447" y="363" width="233" height="17" fill="#280000"/>
<circle cx="1455" cy="371" r="6" fill="#777"/><path d="M1452 370l3 3 3-3" stroke="#222" stroke-width="1.3" fill="none"/>
<text x="1466" y="376" style="font-size:14px">逐笔还原</text>
<path d="M1653 368h7l-2.5 3v3h-2v-3z" fill="none" stroke="#aaa"/>
<text x="1669" y="376" style="font-size:13px;font-weight:bold;fill:#bbb">?</text>

<!-- bar col -->
<rect x="1600.5" y="381" width="40" height="561" fill="#6e0f18" stroke="#444" shape-rendering="crispEdges"/>
<rect x="1601" y="382" width="39" height="303" fill="#f00"/>
<g class="e">
<text x="1638" y="531" class="y">672</text><text x="1638" y="547" class="y">261万</text><text x="1638" y="811" class="y">80</text><text x="1638" y="827" class="y">30.9万</text>
</g>
<path d="M1641 701.5h39M1641 942h0" stroke="#555" shape-rendering="crispEdges"/>
<rect x="1550" y="380.7" width="6" height="560" fill="url(#ar)"/>

<!-- tick rows -->
<g class="Tk">
<text x="1449" y="393">11:25:29</text><text x="1449" y="409">11:25:48</text><text x="1449" y="425">11:25:59</text><text x="1449" y="441">11:26:00</text><text x="1449" y="457">11:26:03</text><text x="1449" y="473">11:26:13</text><text x="1449" y="489">11:26:20</text><text x="1449" y="505">11:26:25</text><text x="1449" y="521">11:26:34</text><text x="1449" y="537">11:26:42</text><text x="1449" y="553">11:27:01</text><text x="1449" y="569">11:27:11</text><text x="1449" y="585">11:27:16</text><text x="1449" y="601">11:27:33</text><text x="1488" y="617" style="fill:#777">2</text><text x="1449" y="633">11:27:36</text><text x="1449" y="649">11:27:40</text><text x="1449" y="665">11:27:52</text><text x="1449" y="681">11:28:03</text><text x="1488" y="697" style="fill:#777">2</text><text x="1449" y="713">11:28:04</text><text x="1449" y="729">11:28:10</text><text x="1449" y="745">11:28:15</text><text x="1449" y="761">11:28:32</text><text x="1449" y="777">11:28:34</text><text x="1449" y="793">11:28:45</text><text x="1449" y="809">11:28:51</text><text x="1449" y="825">11:29:01</text><text x="1449" y="841">11:29:02</text><text x="1449" y="857">11:29:03</text><text x="1449" y="873">11:29:14</text><text x="1449" y="889">11:29:18</text><text x="1449" y="905">11:29:24</text><text x="1449" y="921">11:29:49</text><text x="1449" y="937">11:29:53</text>
<text x="1519" y="393" class="r">38.83</text><text x="1519" y="409" class="r">38.83</text><text x="1519" y="425" class="r">38.83</text><text x="1519" y="441" class="r">38.83</text><text x="1519" y="457" class="r">38.83</text><text x="1519" y="473" class="r">38.83</text><text x="1519" y="489" class="r">38.83</text><text x="1519" y="505" class="r">38.83</text><text x="1519" y="521" class="r">38.83</text><text x="1519" y="537" class="r">38.83</text><text x="1519" y="553" class="r">38.83</text><text x="1519" y="569" class="r">38.83</text><text x="1519" y="585" class="r">38.83</text><text x="1519" y="601" class="r">38.83</text><text x="1519" y="617" class="r">38.83</text><text x="1519" y="633" class="r">38.83</text><text x="1519" y="649" class="r">38.83</text><text x="1519" y="665" class="r">38.83</text><text x="1519" y="681" class="r">38.83</text><text x="1519" y="697" class="r">38.83</text><text x="1519" y="713" class="r">38.83</text><text x="1519" y="729" class="r">38.83</text><text x="1519" y="745" class="r">38.83</text><text x="1519" y="761" class="r">38.83</text><text x="1519" y="777" class="r">38.83</text><text x="1519" y="793" class="r">38.83</text><text x="1519" y="809" class="r">38.83</text><text x="1519" y="825" class="r">38.83</text><text x="1519" y="841" class="r">38.83</text><text x="1519" y="857" class="r">38.83</text><text x="1519" y="873" class="r">38.83</text><text x="1519" y="889" class="r">38.83</text><text x="1519" y="905" class="r">38.83</text><text x="1519" y="921" class="r">38.83</text><text x="1519" y="937" class="r">38.83</text>
</g>
<g class="Tk e">
<text x="1597" y="393" class="o">6<tspan class="gr">S</tspan></text><text x="1597" y="409" class="gr">1S</text><text x="1597" y="425" class="o">15<tspan class="gr">S</tspan></text><text x="1597" y="441" class="o">10<tspan class="gr">S</tspan></text><text x="1597" y="457" class="gr">1S</text><text x="1597" y="473" class="gr">1S</text><text x="1597" y="489" class="o">4<tspan class="gr">S</tspan></text><text x="1597" y="505" class="o">50<tspan class="gr">S</tspan></text><text x="1597" y="521" class="o">2<tspan class="gr">S</tspan></text><text x="1597" y="537" class="gr">1S</text><text x="1597" y="553" class="gr">1S</text><text x="1597" y="569" class="gr">1S</text><text x="1597" y="585" class="o">40<tspan class="gr">S</tspan></text><text x="1597" y="601" class="gr">1S</text><text x="1597" y="617" class="o">40<tspan class="gr">S</tspan></text><text x="1597" y="633" class="o">57<tspan class="gr">S</tspan></text><text x="1597" y="649" class="o">3<tspan class="gr">S</tspan></text><text x="1597" y="665" class="o">3<tspan class="gr">S</tspan></text><text x="1597" y="681" class="gr">0S</text><text x="1597" y="697" class="gr">1S</text><text x="1597" y="713" class="gr">1S</text><text x="1597" y="729" class="o">3<tspan class="gr">S</tspan></text><text x="1597" y="745" class="gr">6S</text><text x="1597" y="761" class="o">2<tspan class="gr">S</tspan></text><text x="1597" y="777" class="o">10<tspan class="gr">S</tspan></text><text x="1597" y="793" class="o">9<tspan class="gr">S</tspan></text><text x="1597" y="809" class="o">5<tspan class="gr">S</tspan></text><text x="1597" y="825" class="gr">1S</text><text x="1597" y="841" class="o">17<tspan class="gr">S</tspan></text><text x="1597" y="857" class="gr">1S</text><text x="1597" y="873" class="gr">1S</text><text x="1597" y="889" class="o">5<tspan class="gr">S</tspan></text><text x="1597" y="905" class="o">2<tspan class="gr">S</tspan></text><text x="1597" y="921" class="o">5<tspan class="gr">S</tspan></text><text x="1597" y="937" class="o">10<tspan class="gr">S</tspan></text>
<text x="1678" y="393" class="o">6</text><text x="1678" y="409" class="o">1</text><text x="1678" y="425" class="o">15</text><text x="1678" y="441" class="o">10</text><text x="1678" y="457" class="o">1</text><text x="1678" y="473" class="o">1</text><text x="1678" y="489" class="o">4</text><text x="1678" y="505" class="o">50</text><text x="1678" y="521" class="o">2</text><text x="1678" y="537" class="o">1</text><text x="1678" y="553" class="o">1</text><text x="1678" y="569" class="o">1</text><text x="1678" y="585" class="o">40</text><text x="1678" y="601" class="o">1</text><text x="1678" y="617" class="o">40</text><text x="1678" y="633" class="o">57</text><text x="1678" y="649" class="o">3</text><text x="1678" y="665" class="o">3</text><text x="1678" y="681" class="o">2</text><text x="1678" y="697" class="o">0.8万</text><text x="1678" y="713" class="o">1</text><text x="1678" y="729" class="o">3</text><text x="1678" y="745" class="o">6</text><text x="1678" y="761" class="o">2</text><text x="1678" y="777" class="o">10</text><text x="1678" y="793" class="o">9</text><text x="1678" y="809" class="o">5</text><text x="1678" y="825" class="o">1</text><text x="1678" y="841" class="o">17</text><text x="1678" y="857" class="o">1</text><text x="1678" y="873" class="o">1</text><text x="1678" y="889" class="o">5</text><text x="1678" y="905" class="o">2</text><text x="1678" y="921" class="o">5</text><text x="1678" y="937" class="o">10</text>
</g>
</svg>
</body></html>
